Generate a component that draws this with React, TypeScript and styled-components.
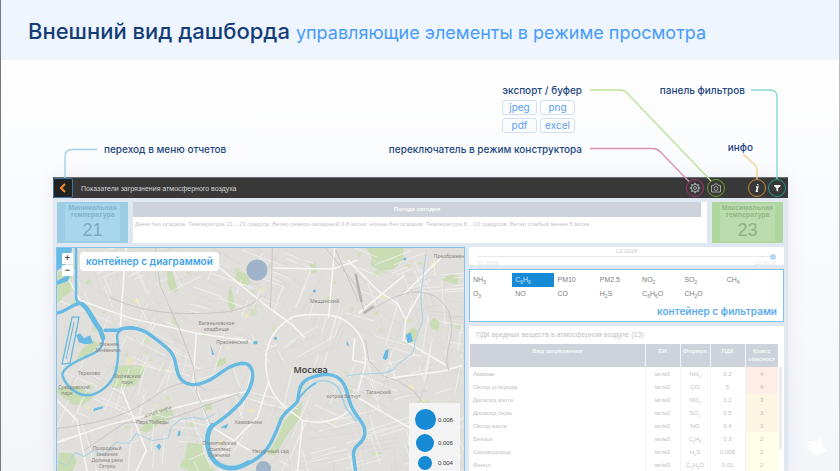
import React, { useState } from "react";
import styled, { createGlobalStyle } from "styled-components";

const GlobalStyle = createGlobalStyle`
  * { box-sizing: border-box; }
  body { margin: 0; background: #fcfdfe; overflow: hidden; }
  button { margin: 0; padding: 0; border: 0; background: none; font: inherit; color: inherit; cursor: pointer; }
`;

const display = `Inter, "Noto Sans", sans-serif`;
const plain = `"Liberation Sans", Arial, sans-serif`;

const Page = styled.div`
  display: flex;
  flex-direction: column;
  height: 100vh;
  overflow: hidden;
  position: relative;
  font-family: ${display};
  border-left: 1px solid #77797c;
  border-right: 1px solid #b9bbbf;
  background: linear-gradient(180deg, #fefefe 60px, #fafbfd 200px, #f3f5f8 471px);
`;

const Header = styled.header`
  display: flex;
  align-items: baseline;
  gap: 6px;
  height: 60px;
  flex: none;
  padding: 17px 27px 0;
  background: #eef5ff;
  white-space: nowrap;
`;

const Title = styled.h1`
  margin: 0;
  font-size: 22px;
  line-height: 28px;
  font-weight: 500;
  color: #143d78;
`;

const Subtitle = styled.p`
  margin: 0;
  font-size: 18px;
  line-height: 28px;
  color: #479bfa;
`;

const Stage = styled.main`
  position: relative;
  flex: 1;
  min-height: 0;
  display: flex;
  flex-direction: column;
  margin: 0 51px 0 52px;
`;

const Callouts = styled.section`
  display: flex;
  height: 117px;
  flex: none;
  padding-top: 22px;
  color: #1d4780;
  font-size: 10px;
  line-height: 16px;
  font-weight: 500;
  white-space: nowrap;
`;

const LeftCallout = styled.div`
  flex: 1;
  padding: 59px 0 0 51px;
`;

const MiddleCallouts = styled.div`
  display: flex;
  flex-direction: column;
  align-items: flex-end;
`;

const RightCallouts = styled.div`
  display: flex;
  flex-direction: column;
  justify-content: space-between;
  align-items: flex-end;
  width: 206px;
  padding: 0 35px 22px 0;
`;

const FilterCallout = styled.span`
  padding-right: 8px;
`;

const Chips = styled.ul`
  display: grid;
  grid-template-columns: 35px 35px;
  gap: 3px;
  margin: 2px 7px 8px 0;
  padding: 0;
  list-style: none;
  font-weight: 400;
  color: #5a9df0;
`;

const Chip = styled.li`
  height: 15px;
  line-height: 12px;
  text-align: center;
  border: 1px solid #cfe0f5;
  border-radius: 3px;
`;

const Connectors = styled.svg<{ $side: "left" | "right" }>`
  position: absolute;
  top: 0;
  ${(p) => p.$side}: 0;
  pointer-events: none;
  fill: none;
  stroke-width: 1.4;
`;

const Dashboard = styled.section`
  flex: 1;
  min-height: 0;
  display: flex;
  flex-direction: column;
  background: #dfe8f0;
  font-family: ${plain};
  box-shadow: 0 0 14px rgba(120, 140, 190, 0.13);
`;

const Bar = styled.div`
  display: flex;
  align-items: center;
  height: 21px;
  flex: none;
  padding-right: 2px;
  background: #383838;
  border-top: 1px solid #6c6e70;
  color: #d5d5d5;
  font-size: 7px;
`;

const BackButton = styled.button`
  display: grid;
  place-items: center;
  width: 20px;
  height: 20px;
  margin-right: 8px;
  border: 1px solid #3d76a3;
  border-radius: 2px;
  background: #222;
`;

const BarTitle = styled.span`
  flex: 1;
`;

const BarGroup = styled.div<{ $gap: number }>`
  display: flex;
  gap: ${(p) => p.$gap}px;
  margin-left: 23px;
`;

const RoundButton = styled.button<{ $ring: string }>`
  display: grid;
  place-items: center;
  width: 18px;
  height: 18px;
  border: 1px solid ${(p) => p.$ring};
  border-radius: 50%;
`;

const Summary = styled.div`
  display: flex;
  gap: 5px;
  height: 41px;
  flex: none;
  margin: 4px 5px 4px 4px;
`;

const Tile = styled.div<{ $edge: string; $fill: string; $ink: string; $value: string }>`
  width: 71px;
  flex: none;
  border: solid ${(p) => p.$edge};
  border-width: 2px 8px;
  background: ${(p) => p.$fill};
  color: ${(p) => p.$ink};
  display: flex;
  flex-direction: column;
  align-items: center;
  font-size: 7px;
  line-height: 7px;
  font-weight: 700;
  text-align: center;
  white-space: nowrap;
  strong {
    font-size: 18px;
    line-height: 24px;
    font-weight: 400;
    color: ${(p) => p.$value};
  }
`;

const Weather = styled.div`
  flex: 1;
  min-width: 0;
  padding-right: 6px;
  background: #fff;
  font-size: 6px;
  color: #c3c3c5;
  white-space: nowrap;
  h2 {
    margin: 0 0 3px;
    font-size: 6px;
    line-height: 15px;
    text-align: center;
    color: #fafbfc;
    background: #ced3db;
  }
  p {
    margin: 0;
    padding-left: 2px;
    line-height: 8px;
  }
`;

const Body = styled.div`
  flex: 1;
  min-height: 0;
  display: flex;
  gap: 4px;
  margin: 0 4px 0 3px;
`;

const MapPanel = styled.div`
  position: relative;
  flex: 408;
  min-width: 0;
  overflow: hidden;
  border: 1px solid #83c1f0;
  border-bottom: 0;
  background: #e3e2df;
`;

const MapDrawing = styled.svg`
  display: block;
  width: 100%;
  height: 100%;
`;

const MapTools = styled.div`
  position: absolute;
  top: 4px;
  left: 5px;
  display: flex;
  align-items: flex-start;
  gap: 7px;
`;

const ZoomStack = styled.div`
  display: grid;
  gap: 1px;
  margin-top: 1px;
  button {
    width: 11px;
    height: 11px;
    background: #fff;
    border-radius: 1px;
    color: #444;
    font-size: 9px;
    line-height: 11px;
    font-weight: 700;
  }
`;

const PanelTag = styled.span`
  height: 19px;
  padding: 0 6px;
  border-radius: 4px;
  background: #fff;
  color: #419fe8;
  font-family: ${display};
  font-size: 10px;
  line-height: 19px;
  font-weight: 600;
  white-space: nowrap;
`;

const Legend = styled.ul`
  position: absolute;
  right: 4px;
  bottom: 0;
  width: 51px;
  height: 68px;
  margin: 0;
  padding: 6px 4px 0 6px;
  overflow: hidden;
  list-style: none;
  background: rgba(244, 244, 245, 0.93);
  color: #333;
  font-size: 6px;
`;

const LegendItem = styled.li`
  display: grid;
  grid-template-columns: 21px 1fr;
  align-items: center;
  gap: 2px;
  margin-bottom: 4px;
`;

const Dot = styled.i<{ $size: number }>`
  justify-self: center;
  width: ${(p) => p.$size}px;
  height: ${(p) => p.$size}px;
  border-radius: 50%;
  background: #168ad4;
`;

const Side = styled.div`
  flex: 316;
  min-width: 0;
  display: flex;
  flex-direction: column;
  gap: 4px;
`;

const Period = styled.label`
  display: block;
  flex: none;
  height: 18px;
  padding: 1px 8px 0;
  background: #fff;
  color: #c9c9cb;
  font-size: 6px;
  line-height: 6px;
  text-align: center;
`;

const Ends = styled.span`
  display: flex;
  justify-content: space-between;
  color: #e7e7e9;
`;

const Range = styled.input`
  display: block;
  appearance: none;
  width: 100%;
  height: 6px;
  margin: 0;
  background: linear-gradient(#e8eaec, #e8eaec) 0 2px / 100% 1px no-repeat;
  &::-webkit-slider-thumb {
    appearance: none;
    width: 6px;
    height: 6px;
    border-radius: 50%;
    background: #b3d8ef;
  }
`;

const Filters = styled.div`
  flex: none;
  height: 53px;
  padding: 3px 17px 0 0;
  border: 1px solid #83c1f0;
  background: #fff;
`;

const FilterGrid = styled.div`
  display: grid;
  grid-template-columns: repeat(7, 1fr);
  grid-auto-rows: 14px;
`;

const FilterOption = styled.button<{ $on: boolean }>`
  padding-left: 3px;
  text-align: left;
  font-size: 7px;
  line-height: 12px;
  color: ${(p) => (p.$on ? "#c9e6fa" : "#7b7c80")};
  background: ${(p) => (p.$on ? "#168ad4" : "transparent")};
  sub { font-size: 5px; line-height: 0; }
`;

const FilterTag = styled.div`
  margin: 3px -11px 0 0;
  text-align: right;
  font-family: ${display};
  font-size: 10px;
  line-height: 14px;
  font-weight: 600;
  color: #5cacec;
  white-space: nowrap;
`;

const Report = styled.div`
  flex: 1;
  min-height: 0;
  overflow: hidden;
  padding: 0 2px 0 1px;
  background: #fff;
  color: #bfc0c3;
  h2 {
    margin: 0;
    padding-left: 6px;
    font-size: 7px;
    line-height: 18px;
    font-weight: 400;
  }
`;

const TableArea = styled.div`
  display: flex;
  gap: 1px;
`;

const ScrollTrack = styled.div`
  width: 3px;
  height: 82px;
  margin-top: 23px;
  background: #ececef;
`;

const Table = styled.table`
  flex: 1;
  border-collapse: collapse;
  table-layout: fixed;
  font-size: 6px;
  text-align: center;
  th, td { padding: 0; border-left: 1px solid #f3f4f6; overflow: hidden; white-space: nowrap; }
  th:first-child, td:first-child { border-left: 0; }
  th {
    height: 23px;
    padding-top: 3px;
    line-height: 8px;
    vertical-align: top;
    color: #f5f6f8;
    background: #ced3db;
  }
  td { height: 13px; line-height: 10px; }
  td:first-child { padding-left: 3px; text-align: left; }
  sub { font-size: 4px; line-height: 0; }
`;

const Grade = styled.td<{ $level: number }>`
  background: ${(p) => (p.$level === 4 ? "#fdece8" : p.$level === 3 ? "#fdf4e2" : "#fefee9")};
`;

const Mascot = styled.svg`
  position: absolute;
  right: 10px;
  bottom: 16px;
`;

const formula = (text: string) =>
  text.split(/(_\d)/).map((part, i) => (part[0] === "_" ? <sub key={i}>{part[1]}</sub> : part));

const filterNames = ["NH_3", "C_6H_6", "PM10", "PM2.5", "NO_2", "SO_2", "CH_4", "O_3", "NO", "CO", "H_2S", "C_6H_6O", "CH_2O"];

const substances: [string, string, string, number][] = [
  ["Аммиак", "NH_3", "0.2", 4],
  ["Оксид углерода", "CO", "5", 4],
  ["Диоксид азота", "NO_2", "0.2", 3],
  ["Диоксид серы", "SO_2", "0.5", 3],
  ["Оксид азота", "NO", "0.4", 3],
  ["Бензол", "C_6H_6", "0.3", 2],
  ["Сероводород", "H_2S", "0.008", 2],
  ["Фенол", "C_6H_6O", "0.01", 2],
];

const hash = (n: number) => {
  const v = Math.sin(n * 91.7 + 13.1) * 43758.5453;
  return v - Math.floor(v);
};

const streets = Array.from({ length: 230 }, (_, i) => {
  const x = 57 + hash(i) * 406;
  const y = 248 + hash(i + 300) * 223;
  const tilt = (hash(Math.floor(x / 60) + Math.floor(y / 60) * 7) - 0.5) * 1.2 + (i % 2 ? Math.PI / 2 : 0);
  const len = 12 + hash(i + 600) * 36;
  return `M${x.toFixed(1)} ${y.toFixed(1)}l${(Math.cos(tilt) * len).toFixed(1)} ${(Math.sin(tilt) * len).toFixed(1)}`;
}).join("");

const lawns = Array.from({ length: 75 }, (_, i) => ({
  x: 60 + hash(i + 900) * 396,
  y: 252 + hash(i + 1200) * 214,
  w: 2 + hash(i + 1500) * 5,
  h: 2 + hash(i + 1800) * 5,
  yellow: i % 4 === 0,
}));

const places: [string, number, number][] = [
  ["Ваганьковское", 216, 325],
  ["кладбище", 216, 331],
  ["Пресненский", 232, 344],
  ["Нижние", 109, 346],
  ["Мнёвники", 108, 352],
  ["Терехово", 89, 375],
  ["Филёвский", 127, 378],
  ["парк", 127, 384],
  ["Суворовский", 74, 389],
  ["парк", 67, 395],
  ["Парк Победы", 152, 424],
  ["Природный", 107, 450],
  ["заказник", 107, 456],
  ["Долина реки", 107, 462],
  ["Сетунь", 107, 468],
  ["Олимпийский", 219, 445],
  ["комплекс", 219, 451],
  ["Лужники", 219, 457],
  ["Хамовники", 248, 424],
  ["Мещанский", 324, 303],
  ["Таганский", 378, 394],
  ["остров Балчуг", 343, 398],
  ["Нескучный сад", 270, 453],
  ["Преображен", 448, 258],
];

function CityMap() {
  return (
    <MapDrawing viewBox="57 248 406 223" preserveAspectRatio="xMinYMin slice" role="img" aria-label="Москва">
      <rect x="57" y="248" width="2000" height="2000" fill="#e1dfdc" />
      <g fill="#c9dcb3">
        <path d="M366 248h37l-1 12-9 9-14 2-9-6 1-8zM113 366l33-2-2 9-10 13-23 2 4-11zM57 388l22-2 15 10-12 10-10-2-15-12z" />
        <path d="M187 441l14 2 4 13 8 12 1 3h-24l-11-5 6-10zM302 401l-3 17-13 18-12 19-7-1 10-17 6-15 12-14zM167 271l5 1 6 19-7 1-4-9z" />
        <path d="M151 411l20-5 3 12-16 6-11 8-8-2 10-11zM216 360l9-3 1 6-9 4zM405 334l7-7 5 3-3 11-7 3zM429 322l4-5 6 5-2 9-7-3zM441 280l9-6 8 2-2 9-9-3z" />
        <path d="M93 340l7 4-11 11-13 5 6-11zM59 452l14 1 4 8-5 10H57zM85 261l16-7 3 9-13 6zM236 270l10 4 5 9-7 4-9-8zM230 285l5 22-4 6-4-12zM309 263h6l1 9-5 2zM57 272l15-3-1 22-14 12zM204 404l6-1 2 6-7 2z" />
      </g>
      {lawns.map((l, i) => (
        <rect key={i} x={l.x} y={l.y} width={l.w} height={l.h} fill={l.yellow ? "#ece6bf" : "#d3dfc2"} />
      ))}
      <path d={streets} stroke="#f0efed" strokeWidth=".9" fill="none" />
      <path d={streets} stroke="#d6d4d2" strokeWidth=".5" fill="none" transform="rotate(8 260 350)" />
      <g fill="none" stroke="#f8f7f5" strokeWidth="1.5">
        <path d="M57 258L80 300 130 318 196 333 250 341M217 266l48 39 27 20 12 12M120 330l4-60 2-22M290 318c10-5 42-5 52 1 18 10 23 25 23 44l-8 29M292 317c-25 14-31 38-24 64 5 20 20 28 34 39 21 5 41-1 50-15M57 442l50-17 86-22 55-12M196 333l-3 47 16 45 40 25M57 400l20 20 10 51M122 390l24 60-10 21" />
        <path d="M272 268l61 1 24-9M334 248l-6 70M347 260l30 30 20 14 7 14M358 313l46-38M365 363l-13-3 2-22M352 394l20 12 48 28 40 22M268 382l-11 35-44 44M302 420l-5 51M387 378l55-7 20-6M420 292l-15 27-2 21 42 25M402 295l41-40" />
      </g>
      <g fill="none" stroke="#c6c4c2" strokeWidth=".9">
        <path d="M155 248l5 38 20 45 13 35 4 28 13 30M57 428c40-5 70-11 100-34 25-17 38-12 50-3M110 297c40 20 85 17 114 15 22-3 31-10 37-16M325 248l30 37 8 25M335 250l23 52M363 314l28-16 18-6c24-2 38 10 41 28 4 20-9 35-2 50M365 340l3 20 15 16 15 5 15 10 10 12M272 248l-2 60M84 450l40-27 47-5 68-25" />
      </g>
      <path d="M363 313l10-7M361 302l-6-28" stroke="#b3b1b0" strokeWidth="2.4" />
      <g fill="none" stroke="#a9d2e2" strokeWidth="1">
        <path d="M57 461l10 4 8-13 9 4 10-6 9 5 13-13 13 1 7-10 16 7 16-2 3-11 9-8 14-2 10 2 11-6M345 376c20-5 38 1 49-8 8-13 20-8 20-26l8-22-2-24 5-42" />
        <path d="M308 387c14-13 29-4 32 5l5 15 11 14" strokeWidth="1.8" />
      </g>
      <g fill="none" stroke="#67bae2" strokeLinecap="round" strokeLinejoin="round">
        <path d="M76 246v50q0 6 4 7" strokeWidth="2.6" />
        <path d="M56 313c10-1 14-8 24-10 8 4 11 18 20 27" strokeWidth="3.2" />
        <path d="M82 304c8 5 10 15 18 25l3 9" strokeWidth="4.6" />
        <path d="M103 338c0 15-12 15-20 20-9 4-24 12-20 19 4 10 14 18 24 18 12 0 24-11 28-22 3-9 4-24 2-36 0-8 8-10 16-10" strokeWidth="2.4" />
        <path d="M105 330h13M120 329c23-5 31 7 46 18 13 11 7 20 14 31 5 7 15 8 24 4 14-4 20-17 38-19 10 0 12 10 9 20-4 15-17 28-38 42" strokeWidth="3.4" />
        <path d="M212 425c-8 9-5 25 0 33 8 11 22 13 36 4" strokeWidth="4.8" />
        <path d="M245 464c24-9 28-27 36-46 4-8 12-11 16-17 2-8 0-18 12-23 14-6 27-5 33 4 5 7 5 15 8 22 5 14 16 18 14 31-3 11-12 9-11 20l2 17" strokeWidth="3.4" />
        <path d="M297 400c4-6 9-12 18-17" strokeWidth="1.8" />
      </g>
      <g fill="#67bae2">
        <path d="M57 248h15l-2 13-13 10zM57 281l14-8-3 8-11 4zM76 335l4-2 4 5 6-3 3 8-8 1-6-2zM405 335l5-3 2 9-5 2zM156 446l3-3 2 3-2 4zM382 358l3-8 3-1-1 8-2 3zM178 431l2-1v5l-3 1zM94 408l9-2v2l-10 3zM346 340l2 4 0 3-2-3zM253 341h4v3h-4zM220 427l8-4-2 5zM210 345l4 9-2 1z" />
        <circle cx="275" cy="338" r="1.5" />
        <circle cx="404" cy="259" r="1.5" />
        <circle cx="314" cy="291" r="1.5" />
      </g>
      <path d="M62 364l10-47 7 0-9 46z" fill="none" stroke="#67bae2" strokeWidth="1.3" />
      <path d="M66 359l8-37" stroke="#67bae2" strokeWidth="1" />
      <g fill="#878581" fontFamily='"Noto Sans", sans-serif' fontSize="5" textAnchor="middle">
        {places.map(([name, x, y]) => (
          <text key={name + y} x={x} y={y}>{name}</text>
        ))}
        <text x="158" y="413" transform="rotate(-18 158 413)">аллея мира</text>
      </g>
      <text x="310" y="373" textAnchor="middle" fontFamily='"Noto Sans", sans-serif' fontSize="9" fontWeight="600" fill="#44464a">Москва</text>
      <g fill="#8fa9c6" opacity=".8">
        <circle cx="256.500" cy="270" r="10.500" />
        <circle cx="263" cy="468" r="7.500" />
      </g>
    </MapDrawing>
  );
}

const gearTeeth = Array.from({ length: 8 }, (_, i) => i * 45);

export default function App() {
  const [active, setActive] = useState("C_6H_6");
  return (
    <>
      <GlobalStyle />
      <Page>
        <Header>
          <Title>Внешний вид дашборда</Title>
          <Subtitle>управляющие элементы в режиме просмотра</Subtitle>
        </Header>
        <Stage>
          <Callouts>
            <LeftCallout>переход в меню отчетов</LeftCallout>
            <MiddleCallouts>
              <span>экспорт / буфер</span>
              <Chips>
                <Chip>jpeg</Chip>
                <Chip>png</Chip>
                <Chip>pdf</Chip>
                <Chip>excel</Chip>
              </Chips>
              <span>переключатель в режим конструктора</span>
            </MiddleCallouts>
            <RightCallouts>
              <FilterCallout>панель фильтров</FilterCallout>
              <span>инфо</span>
            </RightCallouts>
          </Callouts>

          <Dashboard>
            <Bar>
              <BackButton aria-label="Назад">
                <svg width="8" height="10" viewBox="0 0 8 10" fill="none" stroke="#f08f2e" strokeWidth="2">
                  <path d="M6 1L2 5l4 4" />
                </svg>
              </BackButton>
              <BarTitle>Показатели загрязнения атмосферного воздуха</BarTitle>
              <BarGroup $gap={3}>
                <RoundButton $ring="#a3346c" aria-label="Конструктор">
                  <svg width="12" height="12" viewBox="0 0 12 12" fill="none" stroke="#a9a9ab">
                    <circle cx="6" cy="6" r="3.700" />
                    <circle cx="6" cy="6" r="1.500" />
                    {gearTeeth.map((a) => (
                      <path key={a} d="M6 .8v1.400" strokeWidth="1.700" transform={`rotate(${a} 6 6)`} />
                    ))}
                  </svg>
                </RoundButton>
                <RoundButton $ring="#6f9f2f" aria-label="Экспорт">
                  <svg width="12" height="12" viewBox="0 0 12 12" fill="none" stroke="#a3a5a0">
                    <path d="M1.500 3.500h2L4.500 2h3l1 1.500h2v6.500h-9z" strokeLinejoin="round" />
                    <circle cx="6" cy="6.500" r="2" />
                  </svg>
                </RoundButton>
              </BarGroup>
              <BarGroup $gap={2}>
                <RoundButton $ring="#c98f35" aria-label="Инфо">
                  <svg width="12" height="12" viewBox="0 0 12 12" fill="none" stroke="#f4f4f4" strokeWidth="1.500">
                    <path d="M5 5h1.800L5.500 9.300H7M6.800 2l-.2 1.300" />
                  </svg>
                </RoundButton>
                <RoundButton $ring="#259b8c" aria-label="Фильтры">
                  <svg width="12" height="12" viewBox="0 0 12 12" fill="#f4f4f4">
                    <path d="M3 3h6.500v1.200L7.200 6v3.800L5.300 8.500V6L3 4.200z" />
                  </svg>
                </RoundButton>
              </BarGroup>
            </Bar>

            <Summary>
              <Tile $edge="#9ccde4" $fill="#a8d6ea" $ink="#80b5cc" $value="#7dabc0">
                <span>Минимальная<br />температура</span>
                <strong>21</strong>
              </Tile>
              <Weather>
                <h2>Погода сегодня</h2>
                <p>Днем без осадков. Температура 21…23 градуса. Ветер северо-западный 3-8 м/сек. Ночью без осадков. Температура 8…10 градусов. Ветер слабый менее 5 м/сек.</p>
              </Weather>
              <Tile $edge="#aed69f" $fill="#badcae" $ink="#91b987" $value="#8fb287">
                <span>Максимальная<br />температура</span>
                <strong>23</strong>
              </Tile>
            </Summary>

            <Body>
              <MapPanel>
                <CityMap />
                <MapTools>
                  <ZoomStack>
                    <button aria-label="Приблизить">+</button>
                    <button aria-label="Отдалить">−</button>
                  </ZoomStack>
                  <PanelTag>контейнер с диаграммой</PanelTag>
                </MapTools>
                <Legend>
                  <LegendItem><Dot $size={21} />0.008</LegendItem>
                  <LegendItem><Dot $size={18} />0.006</LegendItem>
                  <LegendItem><Dot $size={14} />0.004</LegendItem>
                </Legend>
              </MapPanel>

              <Side>
                <Period>
                  12.2018
                  <Range type="range" min={0} max={10} defaultValue={10} />
                  <Ends><span>02.2018</span><span>12.2018</span></Ends>
                </Period>
                <Filters>
                  <FilterGrid>
                    {filterNames.map((name) => (
                      <FilterOption key={name} $on={name === active} aria-pressed={name === active} onClick={() => setActive(name)}>
                        {formula(name)}
                      </FilterOption>
                    ))}
                  </FilterGrid>
                  <FilterTag>контейнер с фильтрами</FilterTag>
                </Filters>
                <Report>
                  <h2>ПДК вредных веществ в атмосферном воздухе (13)</h2>
                  <TableArea>
                    <Table>
                      <colgroup>
                        <col />
                        <col width="35" />
                        <col width="30" />
                        <col width="35" />
                        <col width="33" />
                      </colgroup>
                      <thead>
                        <tr>
                          <th>Вид загрязнения</th>
                          <th>ЕИ</th>
                          <th>Формул</th>
                          <th>ПДК</th>
                          <th>Класс<br />опасност</th>
                        </tr>
                      </thead>
                      <tbody>
                        {substances.map(([name, code, limit, level]) => (
                          <tr key={name}>
                            <td>{name}</td>
                            <td>мг/м3</td>
                            <td>{formula(code)}</td>
                            <td>{limit}</td>
                            <Grade $level={level}>{level}</Grade>
                          </tr>
                        ))}
                      </tbody>
                    </Table>
                    <ScrollTrack />
                  </TableArea>
                </Report>
              </Side>
            </Body>
          </Dashboard>

          <Connectors $side="left" width="50" height="120" viewBox="53 60 50 120" stroke="#a3cfeb">
            <path d="M65 178v-21q0-7.500 7-7.500h25" />
          </Connectors>
          <Connectors $side="right" width="203" height="140" viewBox="585 60 203 140">
            <path d="M590 90h29q5 0 8 3l84 88" stroke="#bde29a" />
            <path d="M590 148.500h63q4 0 7 3l29 30" stroke="#d993b6" />
            <path d="M743 154l10 9q4 3 4 8v8" stroke="#f2cd90" />
            <path d="M751 90h19q7 0 7 7v82" stroke="#84dbd0" />
          </Connectors>
        </Stage>
        <Mascot width="24" height="20" viewBox="0 0 24 20" fill="#fff" aria-hidden="true">
          <path d="M1 7l9 0 3-2 2-4 2 5 1 6 4 4-5 2-4 2-4-1-4-3 3 0-6-3 4 0-5-3 5 0z" />
        </Mascot>
      </Page>
    </>
  );
}
